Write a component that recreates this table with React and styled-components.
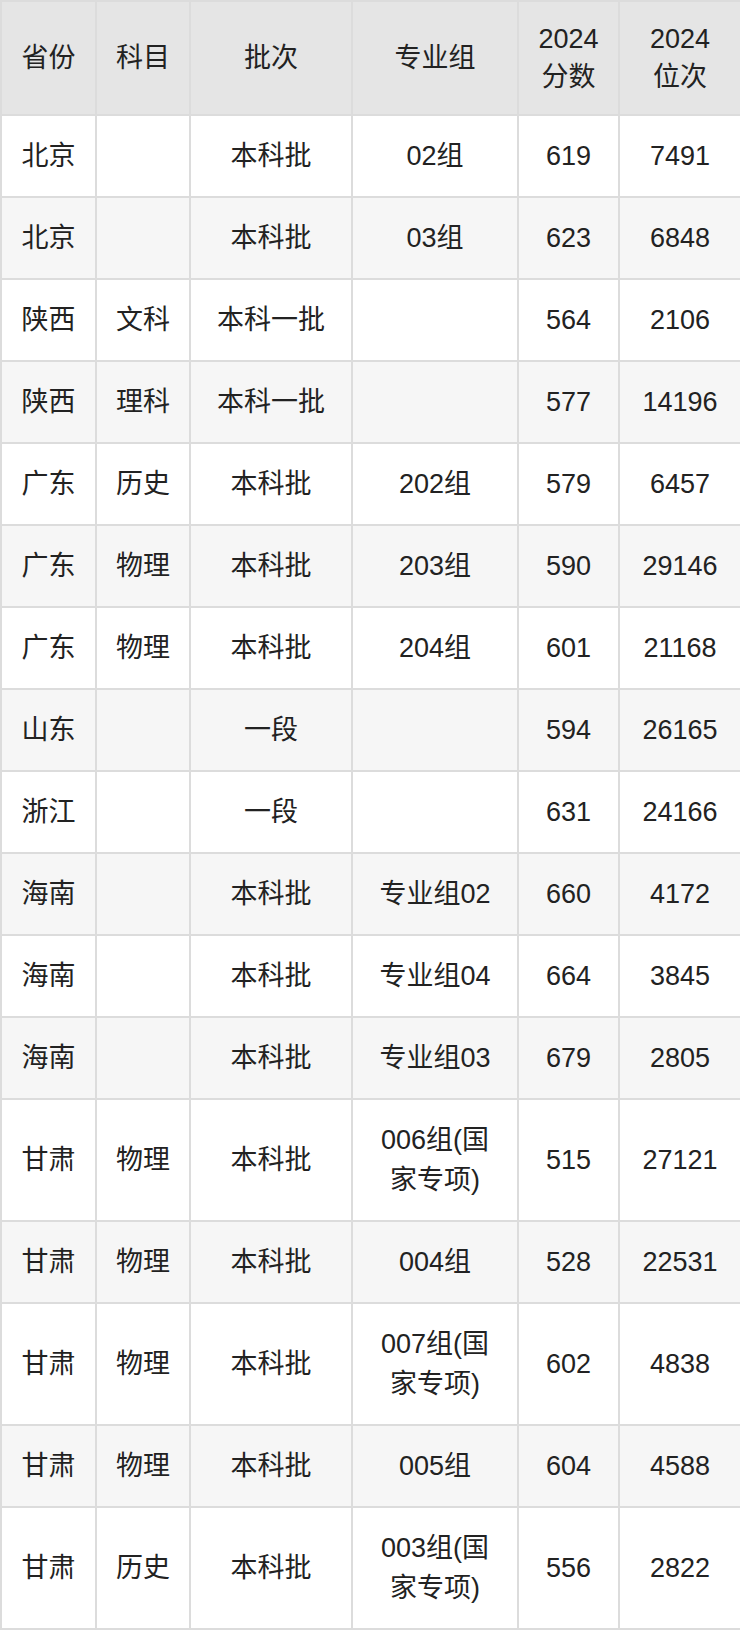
import React from 'react';
import styled, { createGlobalStyle } from 'styled-components';

const GlobalStyle = createGlobalStyle`
  html, body {
    margin: 0;
    padding: 0;
    background: #fff;
  }
`;

const Table = styled.table`
  width: 740px;
  table-layout: fixed;
  border-collapse: collapse;
  border: 2px solid #dcdcdc;
  font-family: "Liberation Sans", "Noto Sans CJK SC", sans-serif;
  font-size: 27px;
  color: #222;
`;

const HeadCell = styled.th`
  border: 2px solid #dcdcdc;
  background: #e5e5e5;
  font-weight: normal;
  text-align: center;
  vertical-align: middle;
  line-height: 38px;
  padding: 18px 10px;
`;

const Row = styled.tr`
  background: ${(p) => (p.$striped ? '#f6f6f6' : '#fff')};
`;

const Cell = styled.td`
  border: 2px solid #dcdcdc;
  text-align: center;
  vertical-align: middle;
  line-height: 40px;
  padding: 20px 18px;
`;

// widths between border centres: 94 94 162 166 101 121
const widths = [95, 94, 162, 166, 101, 122];

const rows = [
  ['北京', '', '本科批', '02组', '619', '7491'],
  ['北京', '', '本科批', '03组', '623', '6848'],
  ['陕西', '文科', '本科一批', '', '564', '2106'],
  ['陕西', '理科', '本科一批', '', '577', '14196'],
  ['广东', '历史', '本科批', '202组', '579', '6457'],
  ['广东', '物理', '本科批', '203组', '590', '29146'],
  ['广东', '物理', '本科批', '204组', '601', '21168'],
  ['山东', '', '一段', '', '594', '26165'],
  ['浙江', '', '一段', '', '631', '24166'],
  ['海南', '', '本科批', '专业组02', '660', '4172'],
  ['海南', '', '本科批', '专业组04', '664', '3845'],
  ['海南', '', '本科批', '专业组03', '679', '2805'],
  ['甘肃', '物理', '本科批', '006组(国家专项)', '515', '27121'],
  ['甘肃', '物理', '本科批', '004组', '528', '22531'],
  ['甘肃', '物理', '本科批', '007组(国家专项)', '602', '4838'],
  ['甘肃', '物理', '本科批', '005组', '604', '4588'],
  ['甘肃', '历史', '本科批', '003组(国家专项)', '556', '2822'],
];

export default function App() {
  return (
    <>
      <GlobalStyle />
      <Table>
        <colgroup>
          {widths.map((w, i) => <col key={i} style={{ width: w }} />)}
        </colgroup>
        <thead>
          <tr>
            <HeadCell>省份</HeadCell>
            <HeadCell>科目</HeadCell>
            <HeadCell>批次</HeadCell>
            <HeadCell>专业组</HeadCell>
            <HeadCell>2024<br />分数</HeadCell>
            <HeadCell>2024<br />位次</HeadCell>
          </tr>
        </thead>
        <tbody>
          {rows.map((r, i) => (
            <Row key={i} $striped={i % 2 === 1}>
              {r.map((c, j) => <Cell key={j}>{c}</Cell>)}
            </Row>
          ))}
        </tbody>
      </Table>
    </>
  );
}
